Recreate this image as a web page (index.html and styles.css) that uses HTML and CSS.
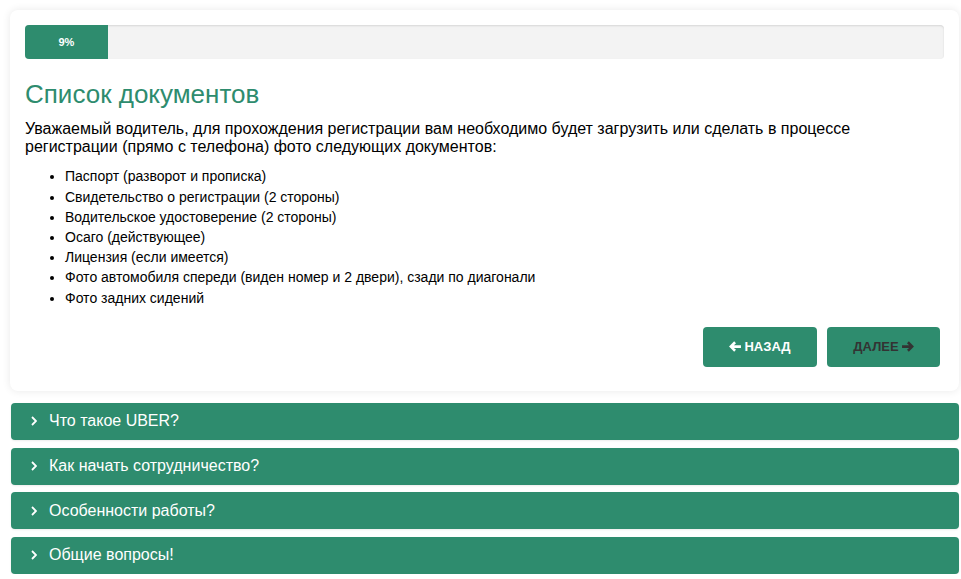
FILE: index.html
```html
<!DOCTYPE html>
<html lang="ru">
<head>
<meta charset="utf-8">
<title>Список документов</title>
<link rel="stylesheet" href="styles.css">
</head>
<body>
<div class="page">
  <div class="card">
    <div class="progress">
      <div class="progress-bar" style="width: 9%">9%</div>
    </div>
    <h3 class="title">Список документов</h3>
    <p class="intro">Уважаемый водитель, для прохождения регистрации вам необходимо будет загрузить или сделать в процессе регистрации (прямо с телефона) фото следующих документов:</p>
    <ul class="docs">
      <li>Паспорт (разворот и прописка)</li>
      <li>Свидетельство о регистрации (2 стороны)</li>
      <li>Водительское удостоверение (2 стороны)</li>
      <li>Осаго (действующее)</li>
      <li>Лицензия (если имеется)</li>
      <li>Фото автомобиля спереди (виден номер и 2 двери), сзади по диагонали</li>
      <li>Фото задних сидений</li>
    </ul>
    <div class="actions">
      <button class="btn btn-back"><svg class="arrow" viewBox="0 0 13 12" width="12" height="11"><path d="M0 6 L5.6 0.4 L7.6 2.4 L5.3 4.5 H13 V7.5 H5.3 L7.6 9.6 L5.6 11.6 Z" fill="currentColor"/></svg>НАЗАД</button>
      <button class="btn btn-next">ДАЛЕЕ<svg class="arrow" viewBox="0 0 13 12" width="12" height="11"><path d="M13 6 L7.4 0.4 L5.4 2.4 L7.7 4.5 H0 V7.5 H7.7 L5.4 9.6 L7.4 11.6 Z" fill="currentColor"/></svg></button>
    </div>
  </div>

  <div class="faq">
    <div class="faq-item"><svg class="chev" viewBox="0 0 6 10" width="6" height="10"><polyline points="1,1 5,5 1,9" fill="none" stroke="currentColor" stroke-width="1.8"/></svg><span>Что такое UBER?</span></div>
    <div class="faq-item"><svg class="chev" viewBox="0 0 6 10" width="6" height="10"><polyline points="1,1 5,5 1,9" fill="none" stroke="currentColor" stroke-width="1.8"/></svg><span>Как начать сотрудничество?</span></div>
    <div class="faq-item"><svg class="chev" viewBox="0 0 6 10" width="6" height="10"><polyline points="1,1 5,5 1,9" fill="none" stroke="currentColor" stroke-width="1.8"/></svg><span>Особенности работы?</span></div>
    <div class="faq-item"><svg class="chev" viewBox="0 0 6 10" width="6" height="10"><polyline points="1,1 5,5 1,9" fill="none" stroke="currentColor" stroke-width="1.8"/></svg><span>Общие вопросы!</span></div>
  </div>
</div>
</body>
</html>
```

FILE: styles.css
```css
* { box-sizing: border-box; }
html, body { margin: 0; padding: 0; background: #fff; }
body {
  font-family: "Liberation Sans", Arial, sans-serif;
  color: #000;
}
.page {
  padding: 10px 2px 0 10px;
}
.card {
  background: #fff;
  border-radius: 8px;
  box-shadow: 0 0 8px rgba(0, 0, 0, 0.09);
  padding: 15px 15px 24px 15px;
}
.progress {
  height: 34px;
  background: #f3f3f3;
  border-radius: 4px;
  box-shadow: inset 0 1px 2px rgba(0, 0, 0, 0.12);
  overflow: hidden;
}
.progress-bar {
  height: 100%;
  background: #2e8c6e;
  color: #fff;
  font-size: 11px;
  font-weight: bold;
  display: flex;
  align-items: center;
  justify-content: center;
}
.title {
  margin: 21px 0 11px 0;
  font-size: 26px;
  font-weight: normal;
  line-height: 1.1;
  color: #2e8c6e;
}
.intro {
  margin: 0 0 10px 0;
  font-size: 16px;
  line-height: 18.4px;
}
.docs {
  margin: 0;
  padding-left: 40px;
  font-size: 14px;
  line-height: 20.2px;
}
.actions {
  display: flex;
  justify-content: flex-end;
  gap: 10px;
  margin-top: 19px;
  padding-right: 4px;
}
.btn {
  height: 40px;
  border: none;
  border-radius: 4px;
  background: #2e8c6e;
  font-family: "Liberation Sans", Arial, sans-serif;
  font-size: 13px;
  font-weight: bold;
  display: flex;
  align-items: center;
  justify-content: center;
  gap: 3px;
  padding: 0;
}
.btn-back { width: 114px; color: #fff; }
.btn-next { width: 113px; color: #333; }
.arrow { display: block; }
.faq {
  margin-top: 12px;
  padding-left: 1px;
  display: flex;
  flex-direction: column;
  gap: 7.7px;
}
.faq-item {
  height: 37px;
  background: #2e8c6e;
  border-radius: 4px;
  color: #fff;
  font-size: 16px;
  display: flex;
  align-items: center;
  padding-left: 20px;
  box-shadow: 0 1px 2px rgba(0, 0, 0, 0.08);
}
.chev { margin-right: 12px; display: block; }
```
